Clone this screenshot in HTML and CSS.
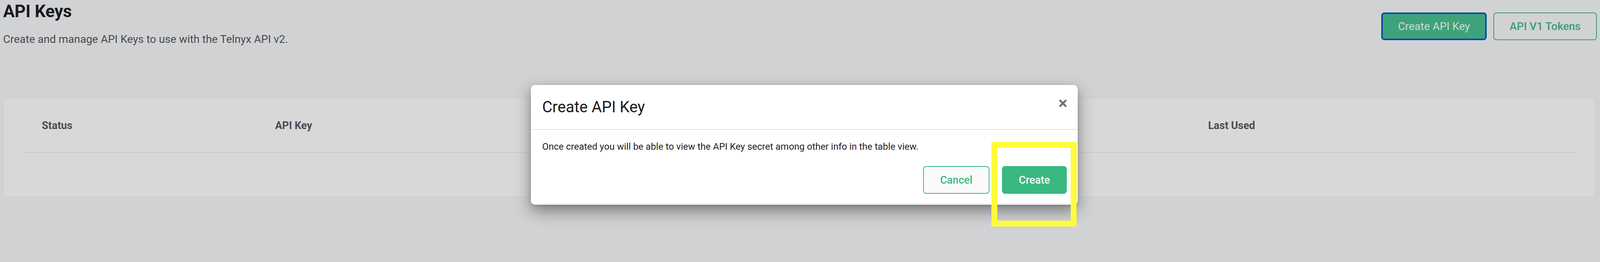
FILE: index.html
```html
<!DOCTYPE html>
<html lang="en">
<head>
<meta charset="utf-8">
<title>API Keys</title>
<link rel="stylesheet" href="styles.css">
</head>
<body>
<div class="page">
  <header class="page-head">
    <div class="page-title">
      <h1>API Keys</h1>
      <p class="subtitle">Create and manage API Keys to use with the Telnyx API v2.</p>
    </div>
    <div class="actions">
      <button class="btn btn-solid btn-focus">Create API Key</button>
      <button class="btn btn-outline">API V1 Tokens</button>
    </div>
  </header>

  <section class="card">
    <table class="keys-table">
      <thead>
        <tr>
          <th class="col-status">Status</th>
          <th class="col-key">API Key</th>
          <th class="col-used">Last Used</th>
        </tr>
      </thead>
      <tbody></tbody>
    </table>
  </section>
</div>

<div class="modal" role="dialog" aria-labelledby="modal-title">
  <div class="modal-head">
    <h2 id="modal-title">Create API Key</h2>
    <button class="modal-close" aria-label="Close">
      <svg viewBox="0 0 20 20" width="20" height="20" aria-hidden="true">
        <path d="M3 3 L17 17 M17 3 L3 17" stroke="#6d6d6f" stroke-width="4.6" stroke-linecap="round" fill="none"/>
      </svg>
    </button>
  </div>
  <div class="modal-body">
    <p>Once created you will be able to view the API Key secret among other info in the table view.</p>
    <div class="modal-foot">
      <button class="mbtn mbtn-outline">Cancel</button>
      <span class="mark-wrap">
        <button class="mbtn mbtn-solid">Create</button>
        <span class="highlight"></span>
      </span>
    </div>
  </div>
</div>
</body>
</html>
```

FILE: styles.css
```css
* { box-sizing: border-box; }

html, body {
  margin: 0;
  padding: 0;
  background: #d1d2d4;
  font-family: Roboto, "Liberation Sans", Arial, sans-serif;
}

body {
  min-height: 672px;
  position: relative;
  overflow: hidden;
}

.page {
  padding: 3px 8px 0 8px;
}

.page-head {
  display: flex;
  justify-content: space-between;
  align-items: flex-start;
}

.page-title h1 {
  margin: 0;
  font-size: 44px;
  line-height: 52px;
  font-weight: 700;
  color: #1b1b1d;
  letter-spacing: -0.2px;
}

.subtitle {
  margin: 30px 0 0 0;
  font-size: 28px;
  line-height: 32px;
  color: #48494d;
  font-weight: 400;
}

.actions {
  display: flex;
  gap: 17px;
  margin-top: 29px;
}

.btn {
  height: 71px;
  font-family: inherit;
  font-size: 28px;
  border-radius: 8px;
  cursor: pointer;
}

.btn-solid {
  background: #3ea37a;
  color: #d6d6d6;
  font-weight: 400;
  width: 270px;
}

.btn-focus {
  border: 4px solid #0b4aa6;
}

.btn-outline {
  background: transparent;
  border: 2px solid #3a9e72;
  color: #3a9e72;
  font-weight: 500;
  width: 265px;
}

.card {
  margin: 134px 4px 0 0;
  background: #d8d8d8;
  border: 2px solid #cdcecf;
  border-radius: 8px;
  padding: 30px 45px 113px 46px;
}

.keys-table {
  width: 100%;
  border-collapse: collapse;
  table-layout: fixed;
}

.keys-table th {
  text-align: left;
  font-size: 27px;
  line-height: 32px;
  font-weight: 700;
  color: #4a4d52;
  padding: 23px 0 52px 51px;
  border-bottom: 2px solid #cbcbcb;
}

.col-status { width: 15%; }
.col-key { width: 60%; }
.col-used { width: 25%; }

.modal {
  position: absolute;
  left: calc(50% - 689px);
  top: 218px;
  width: 1400px;
  background: #ffffff;
  border-radius: 10px;
  box-shadow: 0 16px 40px rgba(0, 0, 0, 0.42), 0 2px 8px rgba(0, 0, 0, 0.15);
}

.modal-head {
  position: relative;
  padding: 33px 29px 32px 29px;
  border-bottom: 2px solid #e2e2e2;
}

.modal-head h2 {
  margin: 0;
  font-size: 40px;
  line-height: 48px;
  font-weight: 400;
  color: #1a1a1a;
}

.modal-close {
  position: absolute;
  right: 28px;
  top: 37px;
  width: 20px;
  height: 20px;
  padding: 0;
  border: 0;
  background: transparent;
  display: block;
}

.modal-close svg { display: block; }

.modal-body {
  padding: 29px 28px 28px 29px;
}

.modal-body p {
  margin: 0;
  font-size: 24px;
  line-height: 28px;
  color: #1f1f1f;
}

.modal-foot {
  display: flex;
  justify-content: flex-end;
  gap: 32px;
  margin-top: 36px;
}

.mbtn {
  height: 71px;
  padding: 0;
  font-family: inherit;
  font-size: 27px;
  font-weight: 500;
  border-radius: 8px;
  border: 2px solid #3ab881;
  display: block;
}

.mbtn-outline {
  background: #fafafa;
  color: #3ab881;
  width: 170px;
}

.mbtn-solid {
  background: #3ab881;
  color: #ffffff;
  width: 166px;
}

.mark-wrap {
  position: relative;
  display: block;
}

.highlight {
  position: absolute;
  left: -27px;
  right: -25px;
  top: -62px;
  bottom: -84px;
  border: 15px solid #fffb3a;
  pointer-events: none;
}
```
